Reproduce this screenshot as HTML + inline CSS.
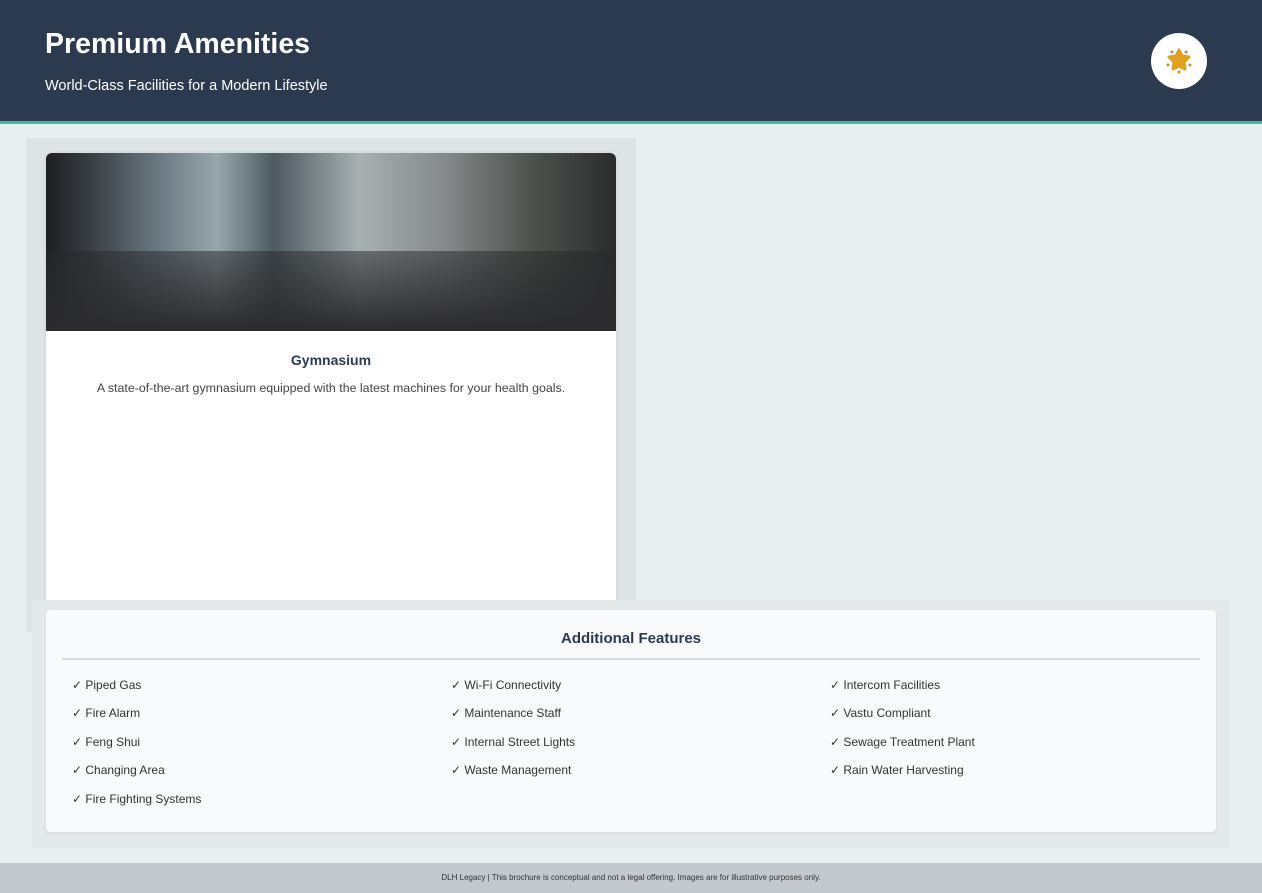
<!DOCTYPE html>
<html><head><style>
body{margin:0;width:1262px;height:893px;background:#e9eef0;font-family:"Liberation Sans",sans-serif;position:relative;overflow:hidden}
.hdr{position:absolute;left:0;top:0;width:1262px;height:121px;background:#2c3a50;border-bottom:3px solid #3fb8a8}
.hdr h1{position:absolute;left:45px;top:28px;margin:0;color:#fff;font-size:28.5px;font-weight:bold}
.hdr p{position:absolute;left:45px;top:78px;margin:0;color:#fff;font-size:14.5px}
.logo{position:absolute;left:1151px;top:33px;width:56px;height:56px;border-radius:50%;background:#fff}
.panel{position:absolute;left:26px;top:138px;width:610px;height:494px;background:#dee3e6}
.card{position:absolute;left:46px;top:153px;width:570px;height:454px;background:#fff;border-radius:6px;overflow:hidden;box-shadow:0 1px 4px rgba(0,0,0,.1)}
.img{height:178px;background:linear-gradient(90deg,#1d1f22 0%,#3a3f44 8%,#6c7a83 20%,#99a6ac 30%,#4d5a60 40%,#a8b0b2 55%,#85898a 70%,#4e534f 85%,#2a2c2c 100%);position:relative}
.img:after{content:"";position:absolute;left:0;right:0;bottom:0;height:80px;background:linear-gradient(180deg,rgba(40,40,42,.5),#2b2b2d)}
.card h3{margin:21px 0 0;text-align:center;font-size:14px;color:#2c3a50}
.card p{margin:13px 0 0;text-align:center;font-size:12.4px;color:#444}
.outer{position:absolute;left:32px;top:600px;width:1198px;height:248px;background:#e4e9ec}
.feat{position:absolute;left:46px;top:610px;width:1170px;height:222px;background:#f8fafc;border-radius:4px;box-shadow:0 1px 3px rgba(0,0,0,.08)}
.feat h2{margin:20px 0 0;text-align:center;font-size:15px;color:#2c3a50;font-weight:bold}
.feat hr{margin:11px 16px 0;border:0;border-top:2px solid #d6dadd}
.it{position:absolute;font-size:12px;color:#333}
.ft{position:absolute;left:0;top:863px;width:1262px;height:30px;background:#c4c9cd;text-align:center;font-size:8px;color:#333;line-height:30px}
</style></head><body>
<div class="hdr"><h1>Premium Amenities</h1><p>World-Class Facilities for a Modern Lifestyle</p>
<div class="logo"><svg width="56" height="56" viewBox="0 0 56 56"><polygon points="28,17 31,23 38,24 33,29 34,36 28,33 22,36 23,29 18,24 25,23" fill="#e0a020" stroke="#e0a020" stroke-width="3" stroke-linejoin="round"/><circle cx="28" cy="39" r="1.5" fill="#d08a30"/><circle cx="17" cy="32" r="1.5" fill="#d08a30"/><circle cx="39" cy="32" r="1.5" fill="#d08a30"/><circle cx="21" cy="19" r="1.5" fill="#d08a30"/><circle cx="35" cy="19" r="1.5" fill="#d08a30"/></svg></div></div>
<div class="panel"></div>
<div class="card"><div class="img"></div><h3>Gymnasium</h3><p>A state-of-the-art gymnasium equipped with the latest machines for your health goals.</p></div>
<div class="outer"></div>
<div class="feat"><h2>Additional Features</h2><hr>
<div class="it" style="left:26px;top:68px">✓ Piped Gas</div><div class="it" style="left:405px;top:68px">✓ Wi-Fi Connectivity</div><div class="it" style="left:784px;top:68px">✓ Intercom Facilities</div>
<div class="it" style="left:26px;top:96px">✓ Fire Alarm</div><div class="it" style="left:405px;top:96px">✓ Maintenance Staff</div><div class="it" style="left:784px;top:96px">✓ Vastu Compliant</div>
<div class="it" style="left:26px;top:125px">✓ Feng Shui</div><div class="it" style="left:405px;top:125px">✓ Internal Street Lights</div><div class="it" style="left:784px;top:125px">✓ Sewage Treatment Plant</div>
<div class="it" style="left:26px;top:153px">✓ Changing Area</div><div class="it" style="left:405px;top:153px">✓ Waste Management</div><div class="it" style="left:784px;top:153px">✓ Rain Water Harvesting</div>
<div class="it" style="left:26px;top:182px">✓ Fire Fighting Systems</div>
</div>
<div class="ft">DLH Legacy | This brochure is conceptual and not a legal offering. Images are for illustrative purposes only.</div>
</body></html>
